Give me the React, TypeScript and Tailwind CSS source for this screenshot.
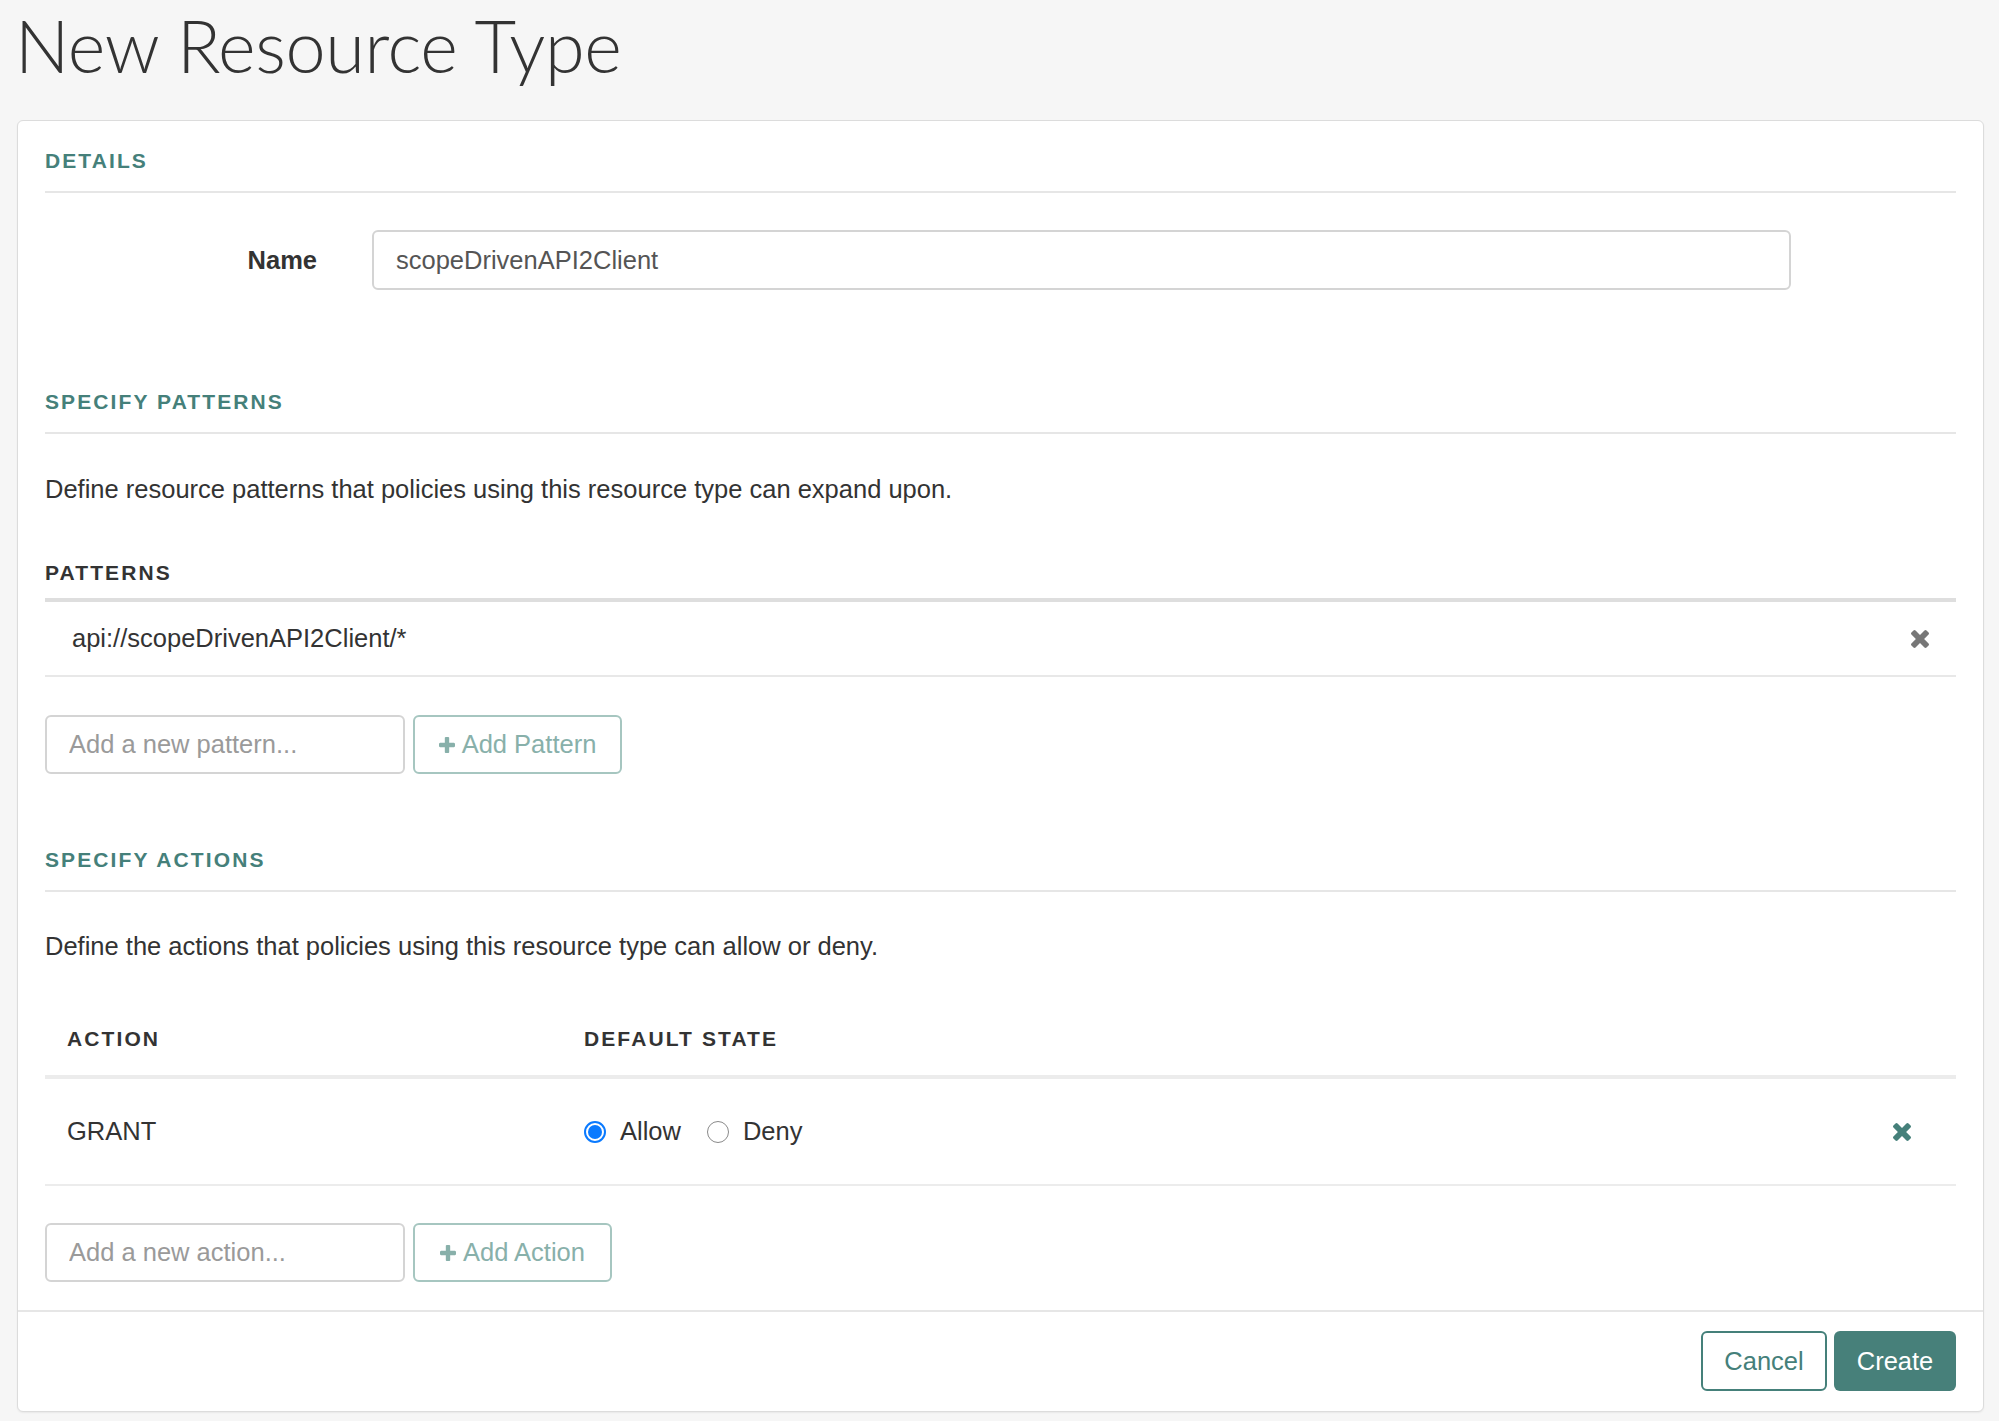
import React from 'react';

const font = { fontFamily: '"Liberation Sans", Arial, sans-serif' };

function TimesIcon({ className }: { className?: string }) {
  return (
    <svg viewBox="110 366 1188 1188" className={className} fill="currentColor">
      <path d="M1298 1322q0 40-28 68l-136 136q-28 28-68 28t-68-28l-294-294-294 294q-28 28-68 28t-68-28l-136-136q-28-28-28-68t28-68l294-294-294-294q-28-28-28-68t28-68l136-136q28-28 68-28t68 28l294 294 294-294q28-28 68-28t68 28l136 136q28 28 28 68t-28 68l-294 294 294 294q28 28 28 68z" />
    </svg>
  );
}

function PlusIcon({ className }: { className?: string }) {
  return (
    <svg viewBox="0 192 1408 1408" className={className} fill="currentColor">
      <path d="M1408 800v192q0 40-28 68t-68 28h-416v416q0 40-28 68t-68 28h-192q-40 0-68-28t-28-68v-416h-416q-40 0-68-28t-28-68v-192q0-40 28-68t68-28h416v-416q0-40 28-68t68-28h192q40 0 68 28t28 68v416h416q40 0 68 28t28 68z" />
    </svg>
  );
}

function SectionHeading({ children, mt }: { children: React.ReactNode; mt: string }) {
  return (
    <div className={`${mt} pb-[18px] border-b-2 border-[#e6e6e6]`}>
      <h2 className="text-[21px] leading-[24px] font-bold tracking-[2.1px] text-[#45807a] uppercase">{children}</h2>
    </div>
  );
}

function AddRow({ placeholder, label, width }: { placeholder: string; label: string; width: string }) {
  return (
    <div className="flex gap-[8px]">
      <input
        placeholder={placeholder}
        className="w-[360px] h-[59px] px-[22px] text-[25.5px] border-2 border-[#d4d4d4] rounded-[6px] placeholder:text-[#9a9a9a] outline-none"
        style={font}
      />
      <button
        className={`${width} h-[59px] flex items-center justify-center gap-[7px] border-2 border-[#a6c6c0] rounded-[6px] text-[25.5px] text-[#88b0aa]`}
        style={font}
      >
        <PlusIcon className="w-[16px] h-[16px]" />
        {label}
      </button>
    </div>
  );
}

function Radio({ checked, label }: { checked: boolean; label: string }) {
  return (
    <label className="flex items-center gap-[14px]">
      {checked ? (
        <span className="w-[22px] h-[22px] rounded-full border-[2px] border-[#0a7aff] flex items-center justify-center">
          <span className="w-[14px] h-[14px] rounded-full bg-[#0a7aff]" />
        </span>
      ) : (
        <span className="w-[22px] h-[22px] rounded-full border-[1.5px] border-[#8a8a8a] bg-white" />
      )}
      <span>{label}</span>
    </label>
  );
}

export default function App() {
  return (
    <div className="min-h-screen bg-[#f6f6f6] text-[#333]" style={font}>
      <div className="h-[120px] pl-[15px] pt-[5px]">
        <h1
          className="text-[72px] leading-[80px] font-light text-[#333] tracking-[-0.4px]"
          style={{ fontFamily: 'Lato, "Liberation Sans", sans-serif' }}
        >
          New Resource Type
        </h1>
      </div>

      <div className="ml-[17px] mr-[15px] bg-white border border-[#dcdcdc] rounded-[6px] shadow-[0_1px_2px_rgba(0,0,0,0.06)]">
        <div className="px-[27px] pb-[28px]">
          {/* Details */}
          <SectionHeading mt="pt-[28px]">Details</SectionHeading>
          <div className="mt-[37px] flex items-center">
            <label className="w-[272px] text-right text-[25.5px] font-bold text-[#333]">Name</label>
            <input
              defaultValue="scopeDrivenAPI2Client"
              className="ml-[55px] w-[1419px] h-[60px] px-[22px] text-[25.5px] text-[#555] border-2 border-[#d4d4d4] rounded-[6px] outline-none"
              style={font}
            />
          </div>

          {/* Patterns */}
          <SectionHeading mt="mt-[100px]">Specify Patterns</SectionHeading>
          <p className="mt-[37px] text-[25.5px] leading-[36px] text-[#333]">
            Define resource patterns that policies using this resource type can expand upon.
          </p>
          <div className="mt-[54px] pb-[13px] border-b-4 border-[#dedede]">
            <h3 className="text-[21px] leading-[24px] font-bold tracking-[2.1px] text-[#333]">PATTERNS</h3>
          </div>
          <div className="h-[75px] flex items-center justify-between pl-[27px] pr-[27px] border-b-2 border-[#e8e8e8] text-[25.5px]">
            <span>api://scopeDrivenAPI2Client/*</span>
            <TimesIcon className="w-[18px] h-[18px] text-[#777]" />
          </div>
          <div className="mt-[38px]">
            <AddRow placeholder="Add a new pattern..." label="Add Pattern" width="w-[209px]" />
          </div>

          {/* Actions */}
          <SectionHeading mt="mt-[74px]">Specify Actions</SectionHeading>
          <p className="mt-[36px] text-[25.5px] leading-[36px] text-[#333]">
            Define the actions that policies using this resource type can allow or deny.
          </p>
          <div className="mt-[39px] h-[76px] grid grid-cols-[517px_1fr] items-center border-b-4 border-[#ececec]">
            <span className="pl-[22px] text-[21px] font-bold tracking-[2.1px] text-[#333]">ACTION</span>
            <span className="pl-[22px] text-[21px] font-bold tracking-[2.1px] text-[#333]">DEFAULT STATE</span>
          </div>
          <div className="h-[107px] grid grid-cols-[517px_1fr_auto] items-center border-b-2 border-[#ececec] text-[25.5px]">
            <span className="pl-[22px]">GRANT</span>
            <div className="pl-[22px] flex items-center gap-[26px]">
              <Radio checked label="Allow" />
              <Radio checked={false} label="Deny" />
            </div>
            <div className="pr-[45px]">
              <TimesIcon className="w-[18px] h-[18px] text-[#45807a]" />
            </div>
          </div>
          <div className="mt-[37px]">
            <AddRow placeholder="Add a new action..." label="Add Action" width="w-[199px]" />
          </div>
        </div>

        {/* Footer */}
        <div className="border-t-2 border-[#e6e6e6] px-[27px] pt-[19px] pb-[20px] flex justify-end gap-[7px]">
          <button className="w-[126px] h-[60px] border-2 border-[#45807a] rounded-[6px] text-[25.5px] text-[#45807a] bg-white" style={font}>
            Cancel
          </button>
          <button className="w-[122px] h-[60px] rounded-[6px] text-[25.5px] text-white bg-[#47807a]" style={font}>
            Create
          </button>
        </div>
      </div>
      <div className="h-[12px]" />
    </div>
  );
}
